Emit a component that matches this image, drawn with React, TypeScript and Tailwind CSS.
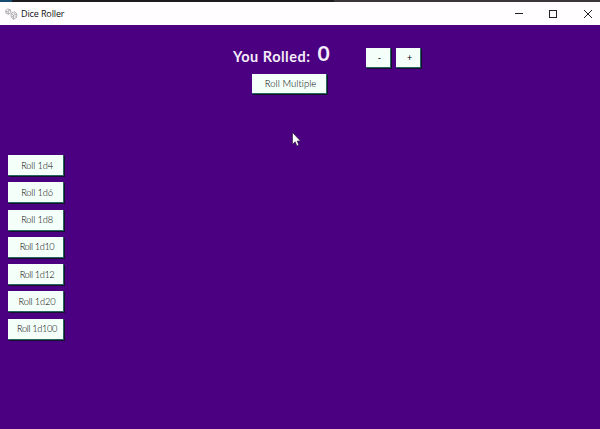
import type { ReactNode } from "react";

const dice = [
  { label: "Roll 1d4", spacing: "tracking-[-0.15px]" },
  { label: "Roll 1d6", spacing: "tracking-[-0.15px]" },
  { label: "Roll 1d8", spacing: "tracking-[-0.15px]" },
  { label: "Roll 1d10", spacing: "tracking-[-0.4px]" },
  { label: "Roll 1d12", spacing: "tracking-[-0.4px]" },
  { label: "Roll 1d20", spacing: "tracking-[-0.15px]" },
  { label: "Roll 1d100", spacing: "tracking-[-0.35px]" },
];

function FlatButton({ size, children }: { size: string; children: ReactNode }) {
  return (
    <button
      className={`flex shrink-0 items-center justify-center whitespace-nowrap border-b border-r border-[#29665f] bg-[#f5fffa] text-black shadow-[1px_1px_0_#15102d] ${size}`}
    >
      {children}
    </button>
  );
}

function DiceIcon() {
  return (
    <svg width="13" height="12" viewBox="0 0 13 12" fill="none" stroke="#98989c" strokeWidth="0.7">
      <path d="M.5 3 2.5.9l2.8.8.5 2.6-2.1 2-2.6-.8Z M.5 3l2.5.9 2.3-2.2M3 3.9l.7 2.4" fill="#f5f5f5" />
      <path d="m6.1 5.2 3.4-1.5 2.5 2.4-.5 3.4-3.1 1.8L6.1 9Z M6.1 5.2l2.4 2L12 6.1M8.5 7.2l-.1 4.1" fill="#eee" />
      <path d="M3 2.2h.5M1.9 4.7h.2M9 5.3h.6M7.3 8.2v.5M10 8.4h.4" stroke="#555" />
    </svg>
  );
}

function Pointer() {
  return (
    <svg className="absolute left-[292px] top-[107px]" width="9" height="15" viewBox="0 0 9 15">
      <path d="M.5.5v11.8l2.7-2.5 1.7 4.1 1.9-.8L5.2 9h3.3Z" fill="#fff" stroke="#211033" strokeWidth="0.6" />
    </svg>
  );
}

export default function App() {
  return (
    <div className="flex h-[429px] w-[600px] flex-col overflow-hidden bg-[#4b0082] font-['Lato','Liberation_Sans',sans-serif]">
      <div className="flex h-[2px] shrink-0 bg-[#3b3638]">
        <div className="w-3 bg-[#174b70]" />
        <div className="w-[322px] bg-[#1d1b1d]" />
      </div>
      <header className="flex h-[23px] shrink-0 items-center bg-[#fffdff] pl-[5px] text-[#111]">
        <DiceIcon />
        <span className="ml-[3px] whitespace-nowrap font-['Open_Sans',sans-serif] text-[9px] leading-none tracking-[-0.12px]">Dice Roller</span>
        <svg className="ml-auto mr-[7px]" width="78" height="10" viewBox="0 0 78 10" fill="none" stroke="#222" strokeWidth="1">
          <path d="M0 4.5h8" />
          <rect x="34.5" y="1.5" width="7" height="7" />
          <path d="m69 1 8 8m0-8-8 8" />
        </svg>
      </header>
      <main className="relative flex flex-1 flex-col">
        <div className="flex h-[49px] shrink-0 pl-[233px]">
          <h1 className="mt-[23px] w-[78px] whitespace-nowrap text-[14.5px] font-bold leading-[17px] tracking-[0.5px] text-[#f5edf9]">You Rolled:</h1>
          <output className="ml-[6px] mt-[16px] w-[13px] text-center text-[21px] font-bold leading-[24px] text-[#f5edf9]">0</output>
          <div className="ml-[36px] mt-[23px] flex gap-[5px]">
            <FlatButton size="h-[20px] w-[25px] pl-[3px] text-[9px]">-</FlatButton>
            <FlatButton size="h-[20px] w-[25px] pl-[3px] text-[9px]">+</FlatButton>
          </div>
        </div>
        <div className="flex pl-[252px]">
          <FlatButton size="h-[20px] w-[75px] pl-[3px] pt-px text-[9.5px] font-light tracking-[0.05px]">Roll Multiple</FlatButton>
        </div>
        <nav className="mt-[61px] flex flex-col gap-[6.3px] pl-2">
          {dice.map(({ label, spacing }) => (
            <FlatButton key={label} size="h-[21px] w-[56px] pl-[3px] pt-px text-[9.25px] font-light">
              <span className={spacing}>{label}</span>
            </FlatButton>
          ))}
        </nav>
        <Pointer />
      </main>
    </div>
  );
}
